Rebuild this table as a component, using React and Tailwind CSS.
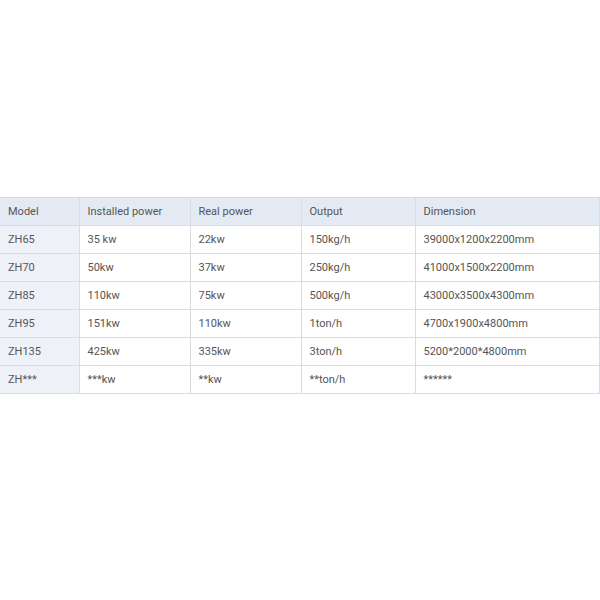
import React from 'react';

const rows = [
    ['ZH65', '35 kw', '22kw', '150kg/h', '39000x1200x2200mm'],
    ['ZH70', '50kw', '37kw', '250kg/h', '41000x1500x2200mm'],
    ['ZH85', '110kw', '75kw', '500kg/h', '43000x3500x4300mm'],
    ['ZH95', '151kw', '110kw', '1ton/h', '4700x1900x4800mm'],
    ['ZH135', '425kw', '335kw', '3ton/h', '5200*2000*4800mm'],
    ['ZH***', '***kw', '**kw', '**ton/h', '******'],
];

const App = () => {
    return (
        <div className="w-[600px] h-[600px] bg-white pt-[197px]" style={{ fontFamily: 'Roboto, "Liberation Sans", sans-serif' }}>
            <table className="w-[599px] border-collapse table-fixed text-[11px] text-[#555]">
                <colgroup>
                    <col className="w-[79px]" />
                    <col className="w-[111px]" />
                    <col className="w-[111px]" />
                    <col className="w-[114px]" />
                    <col className="w-[184px]" />
                </colgroup>
                <thead>
                    <tr className="bg-[#e4eaf3] h-[28px]">
                        {['Model', 'Installed power', 'Real power', 'Output', 'Dimension'].map((h, i) => (
                            <th key={h} className={`border border-[#d9dce0] text-left font-normal pl-[8px] pt-[2px] pb-0 ${i === 0 ? 'border-l-0' : ''}`}>{h}</th>
                        ))}
                    </tr>
                </thead>
                <tbody>
                    {rows.map((r) => (
                        <tr key={r[0]} className="h-[28px]">
                            {r.map((c, i) => (
                                <td key={i} className={`border border-[#d9dce0] pl-[8px] pt-[2px] pb-0 ${i === 0 ? 'bg-[#eef2f8] border-l-0' : 'bg-white'}`}>{c}</td>
                            ))}
                        </tr>
                    ))}
                </tbody>
            </table>
        </div>
    );
};

export default App;
